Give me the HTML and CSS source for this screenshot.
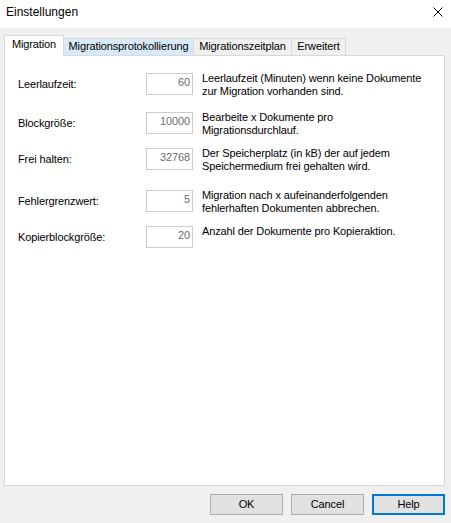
FILE: index.html
```html
<!DOCTYPE html>
<html lang="de">
<head>
<meta charset="utf-8">
<title>Einstellungen</title>
<link rel="stylesheet" href="styles.css">
</head>
<body>
<div class="window">
  <header class="titlebar">
    <span class="title">Einstellungen</span>
    <button class="close" aria-label="Schließen">
      <svg width="10" height="10" viewBox="0 0 10 10"><path d="M0.5 0.5 L9.5 9.5 M9.5 0.5 L0.5 9.5" stroke="#000" stroke-width="1" fill="none"/></svg>
    </button>
  </header>
  <nav class="tabs">
    <div class="tab active t1">Migration</div>
    <div class="tab hover t2">Migrationsprotokollierung</div>
    <div class="tab t3">Migrationszeitplan</div>
    <div class="tab t4">Erweitert</div>
  </nav>
  <main class="panel">
    <div class="row">
      <span class="label">Leerlaufzeit:</span>
      <span class="field">60</span>
      <p class="desc">Leerlaufzeit (Minuten) wenn keine Dokumente<br>zur Migration vorhanden sind.</p>
    </div>
    <div class="row">
      <span class="label">Blockgröße:</span>
      <span class="field">10000</span>
      <p class="desc">Bearbeite x Dokumente pro<br>Migrationsdurchlauf.</p>
    </div>
    <div class="row">
      <span class="label">Frei halten:</span>
      <span class="field">32768</span>
      <p class="desc">Der Speicherplatz (in kB) der auf jedem<br>Speichermedium frei gehalten wird.</p>
    </div>
    <div class="row">
      <span class="label">Fehlergrenzwert:</span>
      <span class="field">5</span>
      <p class="desc">Migration nach x aufeinanderfolgenden<br>fehlerhaften Dokumenten abbrechen.</p>
    </div>
    <div class="row">
      <span class="label">Kopierblockgröße:</span>
      <span class="field">20</span>
      <p class="desc">Anzahl der Dokumente pro Kopieraktion.</p>
    </div>
  </main>
  <footer class="buttons">
    <button class="btn">OK</button>
    <button class="btn">Cancel</button>
    <button class="btn default">Help</button>
  </footer>
</div>
</body>
</html>
```

FILE: styles.css
```css
html, body {
  margin: 0;
  padding: 0;
}
body {
  background: #f0f0f0;
  font-family: "Liberation Sans", Arial, sans-serif;
  font-size: 11px;
  letter-spacing: -0.12px;
  color: #000;
}
.window {
  width: 451px;
  height: 523px;
  display: flex;
  flex-direction: column;
  overflow: hidden;
}
.titlebar {
  height: 28px;
  box-sizing: border-box;
  background: #fff;
  display: flex;
  justify-content: space-between;
  align-items: flex-start;
  padding: 5px 8px 0 6px;
}
.title {
  font-size: 12px;
  line-height: 15px;
  letter-spacing: 0;
}
.close {
  border: 0;
  background: transparent;
  padding: 0;
  margin-top: 2px;
  width: 10px;
  height: 10px;
  display: block;
}
.close svg {
  display: block;
}
.tabs {
  height: 27px;
  box-sizing: border-box;
  display: flex;
  align-items: flex-end;
  padding-left: 4px;
}
.tab {
  box-sizing: border-box;
  height: 17px;
  border: 1px solid #d9d9d9;
  border-bottom: 0;
  background: #f0f0f0;
  text-align: center;
  line-height: 13px;
  padding-top: 1px;
  white-space: nowrap;
}
.tab + .tab {
  margin-left: -1px;
}
.tab.active {
  height: 21px;
  margin-bottom: -1px;
  background: #fff;
  padding-top: 2px;
  position: relative;
  z-index: 1;
}
.tab.hover {
  background: #d8eaf9;
}
.t1 { width: 60px; }
.t2 { width: 131px; }
.t3 { width: 99px; }
.t4 { width: 55px; }
.panel {
  height: 431px;
  box-sizing: border-box;
  margin: 0 6px 0 4px;
  background: #fff;
  border: 1px solid #d9d9d9;
  padding: 17px 0 0 13px;
}
.row {
  display: flex;
  align-items: flex-start;
  height: 22px;
}
.row:nth-child(2) { margin-top: 17px; }
.row:nth-child(3) { margin-top: 14px; }
.row:nth-child(4) { margin-top: 20px; }
.row:nth-child(5) { margin-top: 14px; }
.label {
  width: 128px;
  flex: none;
  line-height: 22px;
}
.field {
  flex: none;
  width: 47px;
  height: 22px;
  box-sizing: border-box;
  border: 1px solid #cccccc;
  text-align: right;
  padding-right: 2px;
  line-height: 17px;
  color: #6d6d6d;
}
.desc {
  margin: -1px 0 0 9px;
  line-height: 13px;
  white-space: nowrap;
}
.buttons {
  display: flex;
  justify-content: flex-end;
  gap: 8px;
  margin-top: 8px;
  padding-right: 6px;
}
.btn {
  width: 73px;
  height: 21px;
  box-sizing: border-box;
  background: #e1e1e1;
  border: 1px solid #adadad;
  font-family: "Liberation Sans", Arial, sans-serif;
  font-size: 11px;
  letter-spacing: -0.12px;
  color: #000;
  padding: 0;
  line-height: 19px;
}
.btn.default {
  border: 2px solid #0078d7;
  line-height: 17px;
}
```
